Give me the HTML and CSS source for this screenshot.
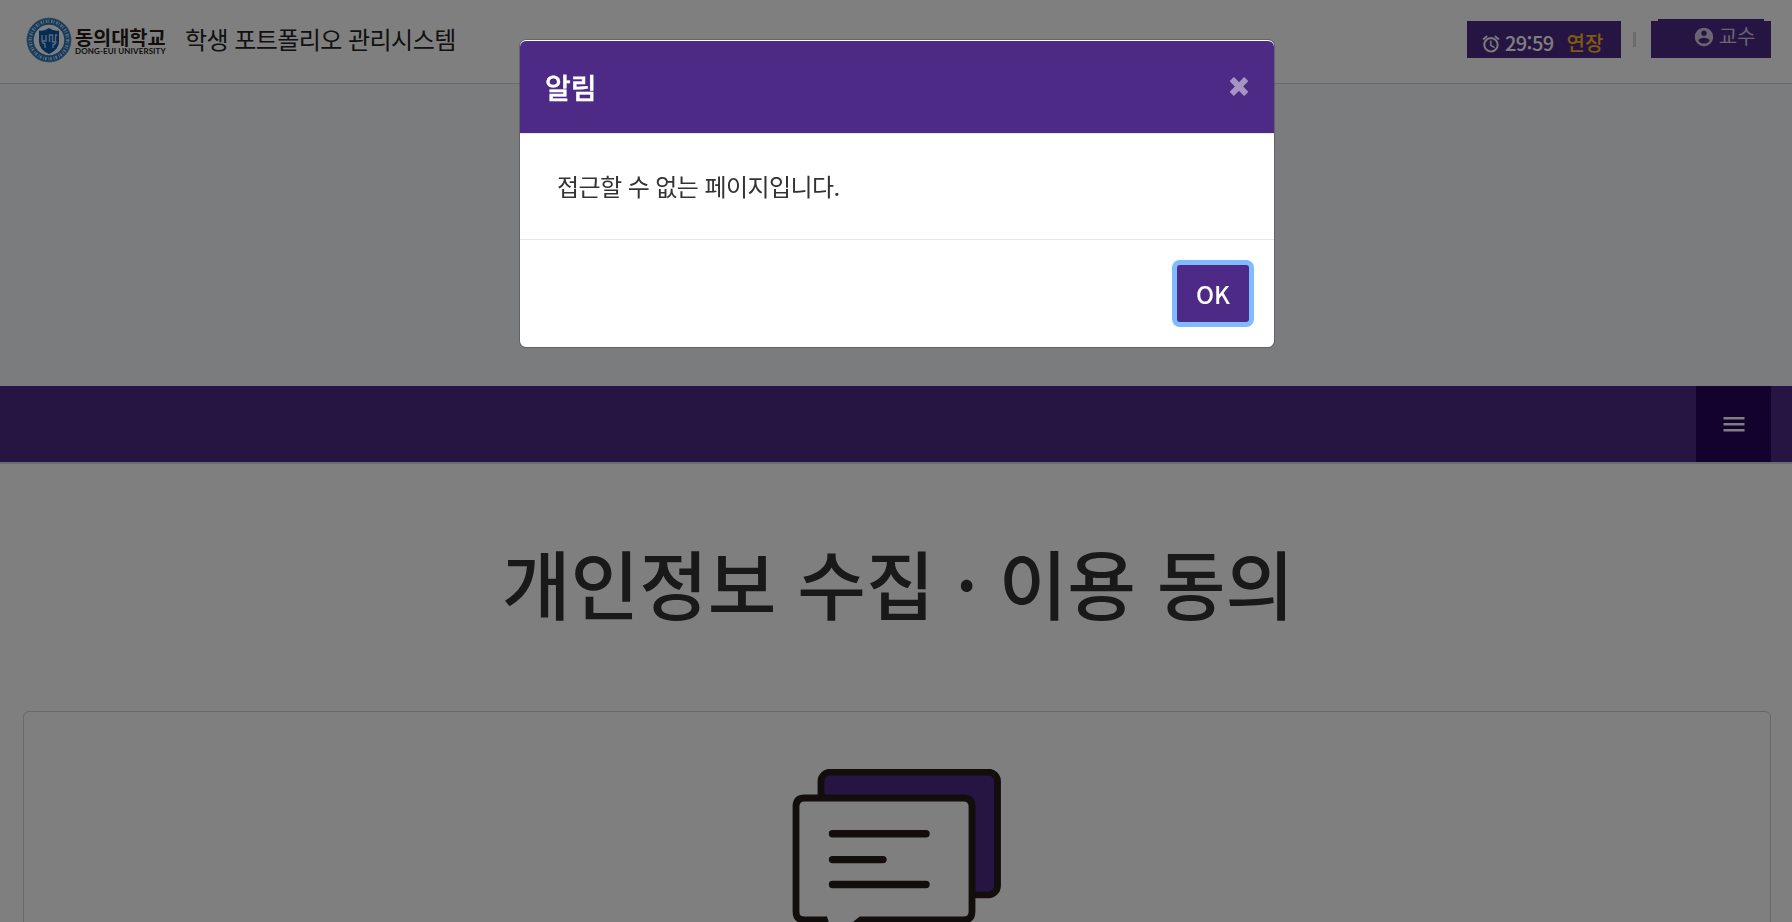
FILE: index.html
```html
<!DOCTYPE html>
<html lang="ko">
<head>
<meta charset="utf-8">
<title>학생 포트폴리오 관리시스템</title>
<link rel="stylesheet" href="styles.css">
</head>
<body>
<header class="topbar">
  <div class="brand">
    <svg class="seal" viewBox="0 0 46 46">
      <circle cx="23" cy="23" r="18.800" fill="none" stroke="#2c76bb" stroke-width="7"/>
      <circle cx="23" cy="23" r="18.800" fill="none" stroke="#c9dcee" stroke-width="3.200" stroke-dasharray="1.500 1.100 .8 1.900"/>
      <circle cx="23" cy="23" r="22" fill="none" stroke="#8fb6da" stroke-width="1" stroke-dasharray="1.500 1"/>
      <path d="M13 13.500q5 1 10-2.500q5 3.500 10 2.500v11q0 8-10 12.500q-10-4.500-10-12.500z" fill="#0659ad"/>
      <path d="M16 18v5q0 3 3 4v4M20 18v6h-4M23.500 25v-7h3v7h3v-7h2M30 24q0 3-3 4v3" fill="none" stroke="#b5d0e8" stroke-width="1.400"/>
    </svg>
    <div class="univ">
      <span class="univ-ko">동의대학교</span>
      <span class="univ-en">DONG-EUI UNIVERSITY</span>
    </div>
    <span class="site-name">학생 포트폴리오 관리시스템</span>
  </div>
  <div class="user-area">
    <div class="timer">
      <svg class="clock" viewBox="0 0 24 24"><path fill="#fff" stroke="#fff" stroke-width=".3" d="M22 5.720l-4.600-3.860-1.290 1.530 4.600 3.860L22 5.720zM7.880 3.390L6.600 1.860 2 5.710l1.290 1.530 4.590-3.850zM12.500 8H11v6l4.750 2.850.75-1.230-4-2.370V8zM12 4c-4.970 0-9 4.030-9 9s4.020 9 9 9a9 9 0 0 0 0-18zm0 16c-3.870 0-7-3.130-7-7s3.130-7 7-7 7 3.130 7 7-3.130 7-7 7z"/></svg>
      <span class="time">29:59</span>
      <span class="extend">연장</span>
    </div>
    <i class="divider"></i>
    <div class="profile">
      <svg class="person" viewBox="0 0 24 24"><path fill="#d4c8e4" d="M12 2C6.480 2 2 6.480 2 12s4.480 10 10 10 10-4.480 10-10S17.520 2 12 2zm0 3c1.660 0 3 1.340 3 3s-1.340 3-3 3-3-1.340-3-3 1.340-3 3-3zm0 14.200c-2.500 0-4.710-1.280-6-3.220.03-1.990 4-3.080 6-3.080 1.990 0 5.970 1.090 6 3.080-1.290 1.940-3.500 3.220-6 3.220z"/></svg>
      <span>교수</span>
    </div>
  </div>
</header>
<section class="hero"></section>
<nav class="menubar">
  <button class="menu-btn"><svg viewBox="0 0 24 16" class="bars"><path fill="#fff" d="M1.500 1h21v2.500h-21zM1.500 7h21v2.500h-21zM1.500 13h21v2.500h-21z"/></svg></button>
</nav>
<main class="content">
  <h1>개인정보 수집 · 이용 동의</h1>
  <div class="card">
    <svg class="chat" viewBox="0 0 210 180">
      <rect x="29" y="3.200" width="176.500" height="122.600" rx="9" fill="#4c2a86" stroke="#261a18" stroke-width="6.800"/>
      <path d="M36 162L32.500 151H12.600q-8.600 0-8.600-8.600V37.600q0-8.600 8.600-8.600H171.400q8.600 0 8.600 8.600V142.400q0 8.600-8.600 8.600H69L60 158" fill="#fff" stroke="#261a18" stroke-width="6.800"/>
      <path d="M40.500 64.800H134M40.500 90.600H91M40.500 115.500H134" stroke="#261a18" stroke-width="7.400" stroke-linecap="round"/>
    </svg>
  </div>
</main>
<div class="backdrop">
  <div class="modal" role="dialog">
    <div class="modal-head">
      <h2>알림</h2>
      <svg class="close" viewBox="0 0 18 19"><path d="M3.800 4.200L14.200 14.800M14.200 4.200L3.800 14.800" stroke="#a794c2" stroke-width="6" stroke-linecap="square"/></svg>
    </div>
    <div class="modal-body">접근할 수 없는 페이지입니다.</div>
    <div class="modal-foot"><button class="ok">OK</button></div>
  </div>
</div>
</body>
</html>
```
FILE: styles.css
```css
* { box-sizing: border-box; }
html, body { height: 100%; }
body {
  margin: 0;
  overflow: hidden;
  background: #fff;
  color: #333;
  font-family: "Noto Sans CJK KR", sans-serif;
}
button { font-family: inherit; border: 0; padding: 0; }

.topbar {
  height: 84px;
  border-bottom: 1px solid #d4d4d4;
  display: flex;
  justify-content: space-between;
  padding: 0 21px 0 26px;
}
.brand { display: flex; align-items: center; height: 80px; }
.seal { width: 46px; height: 46px; }
.univ { width: 91px; margin: 2px 0 0 3px; display: flex; flex-direction: column; white-space: nowrap; }
.univ-ko { font-size: 19.700px; line-height: 21px; font-weight: 700; color: #261a18; }
.univ-en { font-family: Lato, sans-serif; font-size: 8px; line-height: 9px; font-weight: 700; color: #261a18; letter-spacing: .1px; }
.site-name { margin: -2px 0 0 19px; font-size: 24px; line-height: 36px; letter-spacing: -.55px; color: #222; white-space: nowrap; }

.user-area { display: flex; align-items: flex-start; }
.timer {
  margin-top: 21px;
  width: 154px;
  height: 37px;
  padding: 7px 0 0 14px;
  background: #4c2a86;
  color: #fff;
  display: flex;
  align-items: center;
  font-size: 20px;
  line-height: 30px;
  white-space: nowrap;
}
.clock { width: 20px; height: 20px; margin-top: 2px; }
.time { margin-left: 4px; letter-spacing: -.6px; font-weight: 500; }
.extend { margin-left: 13px; color: #ffb41e; font-weight: 500; }
.divider { width: 3px; height: 15px; margin: 32px 15px 0 12px; background: #d8d8d8; }
.profile {
  position: relative;
  width: 120px;
  height: 37px;
  margin-top: 21px;
  padding: 0 16px 8px 0;
  background: #4c2a86;
  color: #d4c8e4;
  display: flex;
  align-items: center;
  justify-content: flex-end;
  gap: 4px;
  font-size: 20px;
  line-height: 30px;
  letter-spacing: -.3px;
}
.profile::before {
  content: "";
  position: absolute;
  left: 7px;
  right: 7px;
  top: -2px;
  height: 2px;
  background: #4c2a86;
}
.person { width: 22px; height: 22px; margin-top: 3px; }

.hero { height: 302px; background: #f7f8fb; }
.menubar {
  height: 78px;
  padding-right: 21px;
  background: #4c2a86;
  border-bottom: 2px solid #d9d9d9;
  display: flex;
  justify-content: flex-end;
}
.menu-btn { width: 75px; height: 76px; background: #26035c; display: flex; align-items: center; justify-content: center; }
.bars { width: 24px; height: 16px; }

.content { padding: 63px 21px 0 23px; }
h1 {
  margin: 0;
  height: 184px;
  padding-left: 2px;
  text-align: center;
  font-size: 74.600px;
  line-height: 108px;
  font-weight: 500;
  white-space: nowrap;
}
.card {
  height: 400px;
  border: 1px solid #d0d0d0;
  border-radius: 6px;
  padding-top: 57px;
  display: flex;
  justify-content: center;
  align-items: flex-start;
}
.chat { width: 210px; height: 180px; }

.backdrop {
  position: fixed;
  inset: 0;
  background: rgba(0, 0, 0, .5);
  display: flex;
  justify-content: center;
  align-items: flex-start;
  padding: 39px 0 0 2px;
}
.modal {
  width: 756px;
  height: 309px;
  background: #fff;
  background-clip: padding-box;
  border: 1px solid rgba(0, 0, 0, .2);
  border-radius: 7px;
}
.modal-head {
  height: 93px;
  margin-top: 1px;
  padding: 0 26px 0 25px;
  background: #4d2a86;
  border-bottom: 1px solid #eae7f0;
  background-clip: padding-box;
  border-radius: 6px 6px 0 0;
  display: flex;
  align-items: center;
  justify-content: space-between;
}
.modal-head h2 { margin: 0; font-size: 28px; line-height: 40px; font-weight: 500; color: #fff; -webkit-text-stroke: .4px #fff; }
.close { width: 18px; height: 19px; margin-bottom: 1px; }
.modal-body {
  height: 105px;
  padding: 34px 37px;
  font-size: 24px;
  line-height: 36px;
  letter-spacing: -.57px;
  color: #333;
}
.modal-foot { border-top: 1px solid #e6e6e6; padding: 25px; display: flex; justify-content: flex-end; }
.ok {
  width: 72px;
  height: 57px;
  border-radius: 3px;
  background: #4d2a86;
  box-shadow: 0 0 0 5px #80bbff;
  color: #fff;
  font-size: 24px;
  font-weight: 500;
}
```
